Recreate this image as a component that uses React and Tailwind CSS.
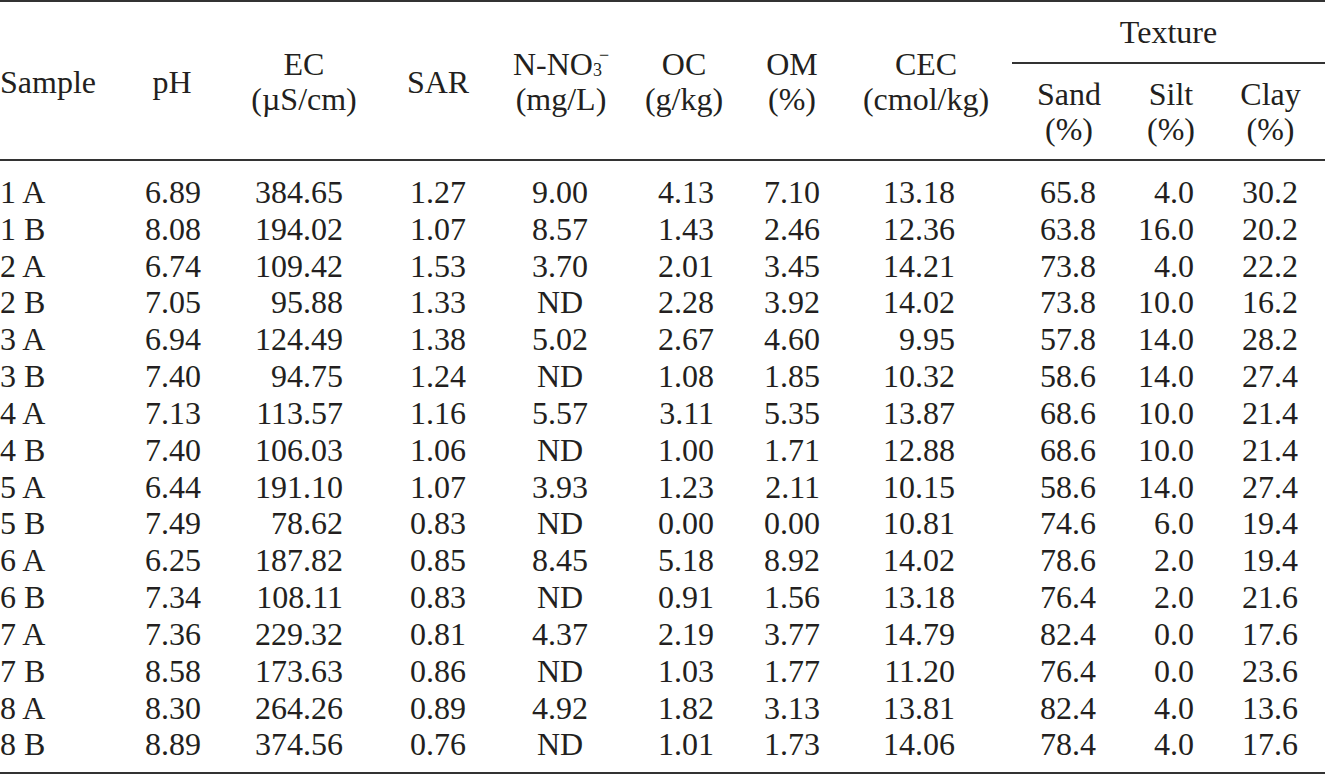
import React from "react";

const rows = [
  ["1 A", "6.89", "384.65", "1.27", "9.00", "4.13", "7.10", "13.18", "65.8", "4.0", "30.2"],
  ["1 B", "8.08", "194.02", "1.07", "8.57", "1.43", "2.46", "12.36", "63.8", "16.0", "20.2"],
  ["2 A", "6.74", "109.42", "1.53", "3.70", "2.01", "3.45", "14.21", "73.8", "4.0", "22.2"],
  ["2 B", "7.05", "95.88", "1.33", "ND", "2.28", "3.92", "14.02", "73.8", "10.0", "16.2"],
  ["3 A", "6.94", "124.49", "1.38", "5.02", "2.67", "4.60", "9.95", "57.8", "14.0", "28.2"],
  ["3 B", "7.40", "94.75", "1.24", "ND", "1.08", "1.85", "10.32", "58.6", "14.0", "27.4"],
  ["4 A", "7.13", "113.57", "1.16", "5.57", "3.11", "5.35", "13.87", "68.6", "10.0", "21.4"],
  ["4 B", "7.40", "106.03", "1.06", "ND", "1.00", "1.71", "12.88", "68.6", "10.0", "21.4"],
  ["5 A", "6.44", "191.10", "1.07", "3.93", "1.23", "2.11", "10.15", "58.6", "14.0", "27.4"],
  ["5 B", "7.49", "78.62", "0.83", "ND", "0.00", "0.00", "10.81", "74.6", "6.0", "19.4"],
  ["6 A", "6.25", "187.82", "0.85", "8.45", "5.18", "8.92", "14.02", "78.6", "2.0", "19.4"],
  ["6 B", "7.34", "108.11", "0.83", "ND", "0.91", "1.56", "13.18", "76.4", "2.0", "21.6"],
  ["7 A", "7.36", "229.32", "0.81", "4.37", "2.19", "3.77", "14.79", "82.4", "0.0", "17.6"],
  ["7 B", "8.58", "173.63", "0.86", "ND", "1.03", "1.77", "11.20", "76.4", "0.0", "23.6"],
  ["8 A", "8.30", "264.26", "0.89", "4.92", "1.82", "3.13", "13.81", "82.4", "4.0", "13.6"],
  ["8 B", "8.89", "374.56", "0.76", "ND", "1.01", "1.73", "14.06", "78.4", "4.0", "17.6"],
];

// data cell alignment per numeric column (right padding + inner box width)
const colCfg = [
  { pr: "pr-[23px]", w: "w-[56px]" },
  { pr: "pr-[41px]", w: "w-[88px]" },
  { pr: "pr-[26px]", w: "w-[56px]" },
  { pr: "pr-[42px]", w: "w-[56px]" },
  { pr: "pr-[24px]", w: "w-[56px]" },
  { pr: "pr-[26px]", w: "w-[56px]" },
  { pr: "pr-[51px]", w: "w-[72px]" },
  { pr: "pr-[30px]", w: "w-[56px]" },
  { pr: "pr-[22px]", w: "w-[56px]" },
  { pr: "pr-[27px]", w: "w-[56px]" },
];

const GRID =
  "grid grid-cols-[120px_104px_160px_108px_138px_108px_108px_160px_120px_90px_109px]";

function H({ children }) {
  return (
    <div className="row-span-2 flex flex-col items-center justify-center pt-[3px] text-center leading-[35px]">
      {children}
    </div>
  );
}

export default function App() {
  return (
    <div className="w-[1325px] h-[776px] bg-white overflow-hidden font-['Liberation_Serif','Times_New_Roman',serif] text-[32px] text-[#231f20]">
      <div className="border-t-2 border-b-2 border-[#333333]">
        {/* header */}
        <div className={`${GRID} grid-rows-[62px_95px]`}>
          <div className="row-span-2 flex items-center pt-[3px] leading-[35px]">Sample</div>
          <H>pH</H>
          <H>
            <span>EC</span>
            <span>(µS/cm)</span>
          </H>
          <H>SAR</H>
          <H>
            <span className="whitespace-nowrap">
              N-NO
              <sub className="bottom-[-1px] text-[18px]">3</sub>
              <sup className="top-[-14px] -ml-[3px] text-[18px]">−</sup>
            </span>
            <span>(mg/L)</span>
          </H>
          <H>
            <span>OC</span>
            <span>(g/kg)</span>
          </H>
          <H>
            <span>OM</span>
            <span>(%)</span>
          </H>
          <H>
            <span>CEC</span>
            <span>(cmol/kg)</span>
          </H>
          <div className="col-span-3 ml-[6px] flex items-center justify-center border-b-2 border-[#333333] leading-[35px]">
            Texture
          </div>
          <div className="flex flex-col items-center justify-center leading-[35px] pl-[6px]">
            <span>Sand</span>
            <span>(%)</span>
          </div>
          <div className="flex flex-col items-center justify-center leading-[35px]">
            <span>Silt</span>
            <span>(%)</span>
          </div>
          <div className="flex flex-col items-center justify-center leading-[35px]">
            <span>Clay</span>
            <span>(%)</span>
          </div>
        </div>
      </div>
      {/* body */}
      <div className="h-[613px] border-b-2 border-[#333333] pt-[13px]">
        {rows.map((r) => (
          <div key={r[0]} className={`${GRID} h-[36.83px] leading-[36.83px]`}>
            <div className="whitespace-nowrap">{r[0]}</div>
            {r.slice(1).map((v, i) => (
              <div key={i} className={`flex justify-end ${colCfg[i].pr}`}>
                <span
                  className={`inline-block whitespace-nowrap ${colCfg[i].w} ${
                    v === "ND" ? "text-center" : "text-right"
                  }`}
                >
                  {v}
                </span>
              </div>
            ))}
          </div>
        ))}
      </div>
    </div>
  );
}
